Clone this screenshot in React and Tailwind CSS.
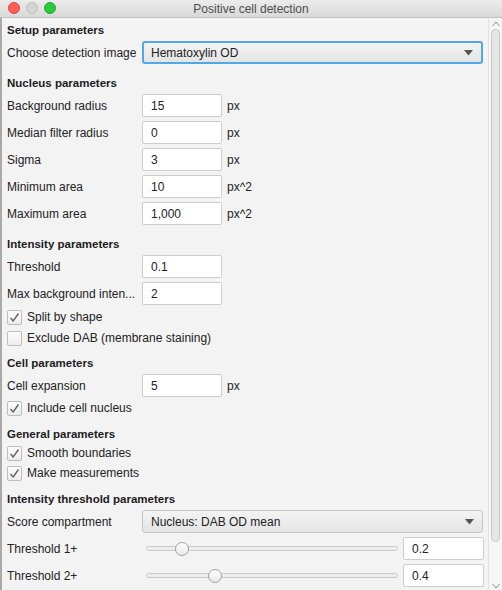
import React from "react";

const Heading = ({ children, className = "" }) => (
  <div className={`h-4 leading-4 text-[11.5px] font-bold text-[#1c1c1c] ${className}`}>
    {children}
  </div>
);

const NumberRow = ({ label, value, unit, className = "" }) => (
  <div className={`flex items-center h-[23px] ${className}`}>
    <div className="w-[135px] truncate">{label}</div>
    <div className="w-[80px] h-[23px] bg-white border border-[#cdcdcd] rounded-[2px] pl-2 flex items-center">
      {value}
    </div>
    {unit && <div className="ml-[5px]">{unit}</div>}
  </div>
);

const Check = ({ label, checked, className = "" }) => (
  <div className={`flex items-center h-5 ${className}`}>
    <div className="w-[15px] h-[15px] rounded-[2px] border border-[#bdbdbd] bg-gradient-to-b from-[#fdfdfd] to-[#ececec] flex items-center justify-center">
      {checked && (
        <svg width="11" height="11" viewBox="0 0 11 11">
          <path d="M1.5 6 L4.2 9 L9.5 1.5" fill="none" stroke="#5c5c5c" strokeWidth="1.3" />
        </svg>
      )}
    </div>
    <div className="ml-[5px]">{label}</div>
  </div>
);

const Select = ({ label, value, focused, className = "" }) => (
  <div className={`flex items-center h-[23px] ${className}`}>
    <div className="w-[135px]">{label}</div>
    <div
      className={`w-[341px] h-[23px] rounded-[3px] bg-gradient-to-b from-[#f4f4f4] to-[#e4e4e4] flex items-center pl-2 pr-[8px] ${
        focused
          ? "border-2 border-[#52a8e6] pl-[7px]"
          : "border border-[#c6c6c6]"
      }`}
    >
      <span className="flex-1">{value}</span>
      <svg width="9" height="6" viewBox="0 0 9 6">
        <path d="M0 0 H9 L4.5 5.5 Z" fill="#555" />
      </svg>
    </div>
  </div>
);

const SliderRow = ({ label, value, pos, className = "" }) => (
  <div className={`flex items-center h-[23px] ${className}`}>
    <div className="w-[139px]">{label}</div>
    <div className="relative w-[252px] h-[14px] flex items-center">
      <div className="w-full h-[5px] rounded-full bg-[#ededed] border border-[#c9c9c9]" />
      <div
        className="absolute top-0 w-[14px] h-[14px] rounded-full border border-[#a0a0a0] bg-gradient-to-b from-[#ffffff] to-[#e9e9e9]"
        style={{ left: pos }}
      />
    </div>
    <div className="ml-[5px] w-[81px] h-[23px] bg-white border border-[#cdcdcd] rounded-[2px] pl-2 flex items-center">
      {value}
    </div>
  </div>
);

export default function App() {
  return (
    <div
      className="w-[502px] h-[590px] overflow-hidden bg-[#f3f3f3] text-[12px] text-[#222]"
      style={{ fontFamily: '"Liberation Sans", Arial, sans-serif' }}
    >
      {/* title bar */}
      <div className="relative h-[18px] bg-gradient-to-b from-[#ececec] to-[#d9d9d9] border-b border-[#c2c2c2] flex items-center justify-center">
        <div className="absolute left-[8px] top-[2px] flex gap-[6px]">
          <div className="w-3 h-3 rounded-full bg-[#fc5f57] border border-[#e2463f]" />
          <div className="w-3 h-3 rounded-full bg-[#d3d3d3] border border-[#c3c3c3]" />
          <div className="w-3 h-3 rounded-full bg-[#2ac940] border border-[#1fab2f]" />
        </div>
        <div className="text-[#4d4d4d] text-[12px] leading-none">Positive cell detection</div>
      </div>

      <div className="flex h-[572px]">
        <div className="w-[2px] bg-[#a9a9a9]" />
        <div className="flex-1 pl-[5px] pt-[4px]">
          <Heading>Setup parameters</Heading>
          <Select className="mt-[3px]" label="Choose detection image" value="Hematoxylin OD" focused />

          <Heading className="mt-[11px]">Nucleus parameters</Heading>
          <NumberRow className="mt-[3px]" label="Background radius" value="15" unit="px" />
          <NumberRow className="mt-[4px]" label="Median filter radius" value="0" unit="px" />
          <NumberRow className="mt-[4px]" label="Sigma" value="3" unit="px" />
          <NumberRow className="mt-[4px]" label="Minimum area" value="10" unit="px^2" />
          <NumberRow className="mt-[4px]" label="Maximum area" value="1,000" unit="px^2" />

          <Heading className="mt-[11px]">Intensity parameters</Heading>
          <NumberRow className="mt-[3px]" label="Threshold" value="0.1" />
          <NumberRow className="mt-[4px]" label="Max background inten..." value="2" />
          <Check className="mt-[2px]" label="Split by shape" checked />
          <Check className="mt-[1px]" label="Exclude DAB (membrane staining)" />

          <Heading className="mt-[7px]">Cell parameters</Heading>
          <NumberRow className="mt-[3px]" label="Cell expansion" value="5" unit="px" />
          <Check className="mt-[1px]" label="Include cell nucleus" checked />

          <Heading className="mt-[8px]">General parameters</Heading>
          <Check className="mt-[1px]" label="Smooth boundaries" checked />
          <Check label="Make measurements" checked />

          <Heading className="mt-[8px]">Intensity threshold parameters</Heading>
          <Select className="mt-[3px]" label="Score compartment" value="Nucleus: DAB OD mean" />
          <SliderRow className="mt-[4px]" label="Threshold 1+" value="0.2" pos={29} />
          <SliderRow className="mt-[4px]" label="Threshold 2+" value="0.4" pos={62} />
        </div>

        {/* scrollbar */}
        <div className="w-[14px] flex flex-col items-center border-l border-[#e2e2e2] bg-[#f6f6f6]">
          <svg className="mt-[3px]" width="8" height="6" viewBox="0 0 8 6">
            <path d="M0.5 5 L4 1 L7.5 5" fill="none" stroke="#8a8a8a" strokeWidth="1" />
          </svg>
          <div className="mt-[2px] w-[9px] h-[513px] rounded-full bg-[#e6e6e6] border border-[#c9c9c9]" />
          <div className="flex-1" />
          <svg className="mb-[1px]" width="8" height="6" viewBox="0 0 8 6">
            <path d="M0.5 1 L4 5 L7.5 1" fill="none" stroke="#8a8a8a" strokeWidth="1" />
          </svg>
        </div>
      </div>
    </div>
  );
}
